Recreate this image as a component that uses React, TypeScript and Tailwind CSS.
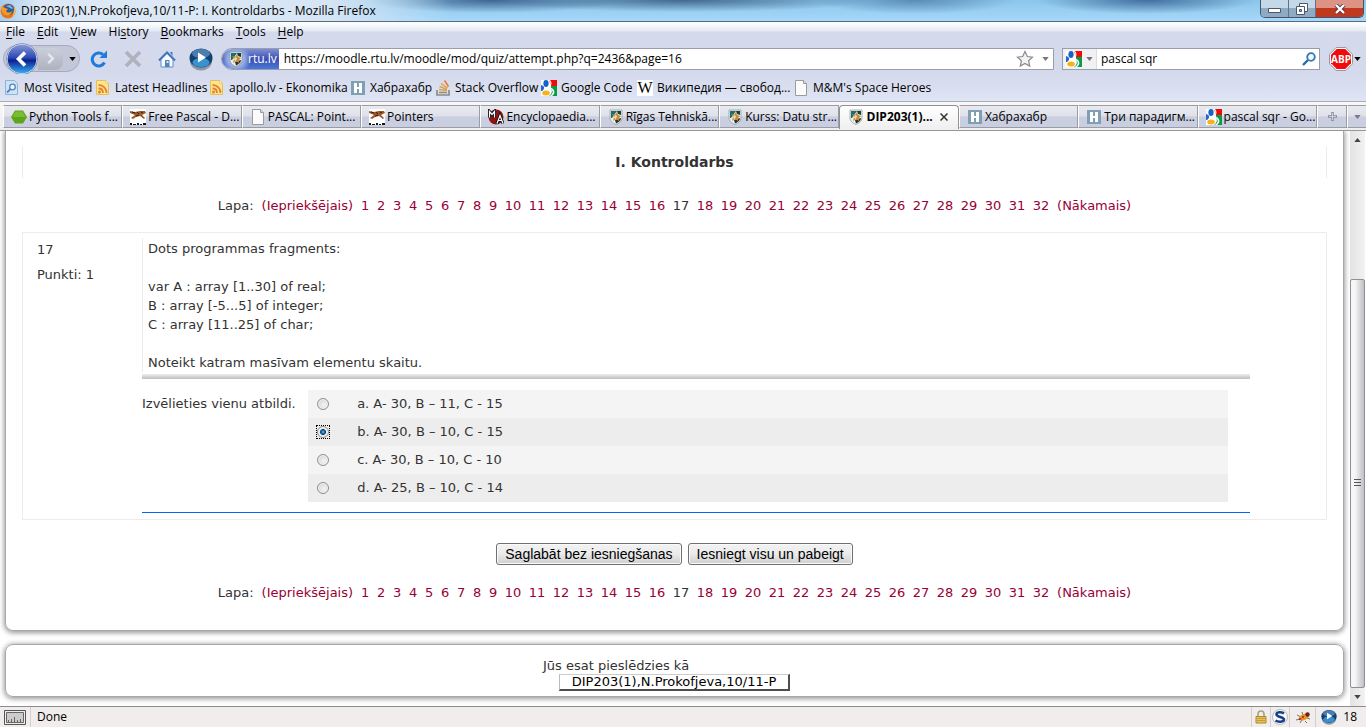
import React from "react";

type IconProps = { className?: string };

const Shield = ({ className = "h-4 w-4" }: IconProps) => (
  <svg viewBox="0 0 16 16" className={`shrink-0 ${className}`} aria-hidden="true">
    <path d="M2 1h12v8c0 3-3 5.5-6 6.5C5 14.500 2 12 2 9z" fill="#e9efe9" stroke="#8b9797" strokeWidth=".7" />
    <path d="M3 2h6L4 9H3z" fill="#1e6b70" />
    <path d="M9 2h4v4l-3-1z" fill="#173f3c" />
    <path d="M7 11l6-2c0 3-3 4.500-5 5.500z" fill="#2e3130" />
    <path d="M4 5l3 1 2-3 1 3 3 1-2 2v3L8 10l-3 2 1-4z" fill="#c98a3a" />
    <path d="M7 6l2 1-1 3-2-1z" fill="#f0dfb4" />
  </svg>
);
const Google = ({ className = "h-4 w-4" }: IconProps) => (
  <svg viewBox="0 0 16 16" className={`shrink-0 ${className}`} aria-hidden="true">
    <path d="M0 0h16v16H0z" fill="#fff" />
    <path d="M8 0h8v6h-6z" fill="#f00a0a" />
    <path d="M10 6h6v10H8c4-3 3-6 2-7z" fill="#0a9b45" />
    <path d="M0 5c4 1 4 4 1 6H0z" fill="#2469c9" />
    <ellipse cx="5" cy="3.500" rx="2.600" ry="3.400" fill="#1764c8" />
    <path d="M7 0c3 1 3 5 1 7l3 3c2 3-1 5-2 6h2c3-2 3-5 1-7L9 7c2-2 2-5 0-7z" fill="#fff" />
    <ellipse cx="5" cy="13" rx="3.800" ry="2.500" fill="#f6b21a" />
  </svg>
);
const Habr = () => (
  <svg viewBox="0 0 16 16" className="h-4 w-4 shrink-0" aria-hidden="true">
    <path d="M1 1h14v14H1z" fill="#7ea0b2" />
    <path d="M4 3h3v4h2V3h3v10H9V9H7v4H4z" fill="#fff" />
  </svg>
);
const Feed = () => (
  <svg viewBox="0 0 16 16" className="h-4 w-4 shrink-0" aria-hidden="true">
    <path d="M1.500.5h9l3 3v11h-12z" fill="#fbe596" stroke="#e9bf55" />
    <path d="M10.500.5v3h3z" fill="#fff6d0" stroke="#e9bf55" strokeWidth=".6" />
    <circle cx="4.500" cy="12" r="1.500" fill="#e9822a" />
    <path d="M3.500 8.500c3 0 4.500 2 4.500 4.500M3.500 5c5 0 8 3.500 8 8" fill="none" stroke="#e9822a" strokeWidth="1.800" />
  </svg>
);
const Page = () => (
  <svg viewBox="0 0 16 16" className="h-4 w-4 shrink-0" aria-hidden="true">
    <path d="M2.500.5h8l3 3v12h-11z" fill="#fbfbfb" stroke="#9b9b9b" />
    <path d="M10.500.5v3h3" fill="#ddd" stroke="#9b9b9b" />
  </svg>
);
const Search = () => (
  <svg viewBox="0 0 16 16" className="h-4 w-4 shrink-0" aria-hidden="true">
    <path d="M1.500 .5h9l3 3v11h-12z" fill="#cfe1f5" stroke="#8eb3dc" />
    <circle cx="8.500" cy="7" r="2.800" fill="#eef6ff" stroke="#5585bd" strokeWidth="1.300" />
    <path d="M6.500 9L3 12.500" stroke="#5585bd" strokeWidth="1.800" />
  </svg>
);
const Stack = () => (
  <svg viewBox="0 0 16 16" className="h-4 w-4 shrink-0" aria-hidden="true">
    <path d="M2 10v5h12v-5" fill="none" stroke="#8a8a8a" strokeWidth="1.700" />
    <path d="M4 12.500h8" stroke="#9a8c74" strokeWidth="1.600" />
    <path d="M4 9.500l8 1M4.500 6.500l7.500 2.700" stroke="#d8a54e" strokeWidth="1.500" />
    <path d="M6 3.500l6.500 4.500" stroke="#e89a3c" strokeWidth="1.500" />
    <path d="M9.500.5l4 6" stroke="#ee7a2e" strokeWidth="1.500" />
  </svg>
);
const Wiki = () => (
  <span className="flex h-4 w-4 shrink-0 items-center justify-center bg-white font-['Liberation_Serif',serif] text-[16px] leading-4 text-black" aria-hidden="true">W</span>
);
const Hexagon = () => (
  <svg viewBox="0 0 16 16" className="h-4 w-4 shrink-0" aria-hidden="true">
    <path d="M4 1.500h8l4 6.500-4 6.500H4L0 8z" fill="#5fa51c" />
    <path d="M4.500 2.500h7L14.500 8H1.500z" fill="#79bd31" />
  </svg>
);
const Cheetah = () => (
  <svg viewBox="0 0 16 16" className="h-4 w-4 shrink-0" aria-hidden="true">
    <path d="M0 0h16v16H0z" fill="#fff" />
    <path d="M0 2l5 1 5-1 5 0 1 2-4 2 3 3-1 1-4-3-4 1-3 2-2-1 4-3-5-2z" fill="#9a5a2c" />
    <path d="M2 3l3 1M7 3l2 2M11 3l2 1M6 7l3-1" stroke="#3a1c0c" strokeWidth="1" />
    <path d="M0 14h2v2H0zM3 15h3v1H3zM7 14h2v2H7zM10 15h2v1h-2zM13 14h3v2h-3z" fill="#151515" />
  </svg>
);
const Encyclo = () => (
  <svg viewBox="0 0 16 16" className="h-4 w-4 shrink-0" aria-hidden="true">
    <circle cx="8" cy="8" r="7.500" fill="#8e1414" />
    <path d="M1.500 8.500v-6L4 5.500l2.500-3v6" fill="none" stroke="#111" strokeWidth="3" />
    <path d="M1.500 8.500v-6L4 5.500l2.500-3v6" fill="none" stroke="#fff" strokeWidth="1.200" />
    <path d="M9 14.500l3-8 3 8M10 11.500h4" fill="none" stroke="#111" strokeWidth="3" />
    <path d="M9 14.500l3-8 3 8M10 11.500h4" fill="none" stroke="#fff" strokeWidth="1.200" />
  </svg>
);
const Arrow = ({ className = "" }: IconProps) => (
  <svg viewBox="0 0 8 5" className={`h-1 w-[7px] shrink-0 ${className}`} aria-hidden="true">
    <path d="M0 0h8L4 5z" fill="currentColor" />
  </svg>
);
const Play = ({ className = "" }: IconProps) => (
  <svg viewBox="0 0 24 24" className={`shrink-0 ${className}`} aria-hidden="true">
    <ellipse cx="12" cy="14" rx="11" ry="9.500" fill="#8b95a8" />
    <ellipse cx="12" cy="11" rx="11.500" ry="9.500" fill="#12406f" />
    <ellipse cx="12" cy="15.500" rx="8.500" ry="4.500" fill="#3793cf" />
    <ellipse cx="12" cy="6.500" rx="9" ry="4.500" fill="#4b7db0" />
    <path d="M9 5.500l8 5-8 5z" fill="#fff" />
  </svg>
);

const menus = ["File", "Edit", "View", "History", "Bookmarks", "Tools", "Help"];
const accessKeys: Record<string, number> = { History: 2 };

const bookmarks = [
  { label: "Most Visited", icon: <Search />, width: "w-[91px]" },
  { label: "Latest Headlines", icon: <Feed />, width: "w-[114px]" },
  { label: "apollo.lv - Ekonomika", icon: <Feed />, width: "w-[141px]" },
  { label: "Хабрахабр", icon: <Habr />, width: "w-[85px]" },
  { label: "Stack Overflow", icon: <Stack />, width: "w-[106px]" },
  { label: "Google Code", icon: <Google />, width: "w-[96px]" },
  { label: "Википедия — свобод...", icon: <Wiki />, width: "w-[156px]" },
  { label: "M&M's Space Heroes", icon: <Page />, width: "w-[150px]" },
];

const tabs = [
  { label: "Python Tools f...", icon: <Hexagon /> },
  { label: "Free Pascal - D...", icon: <Cheetah /> },
  { label: "PASCAL: Point...", icon: <Page /> },
  { label: "Pointers", icon: <Cheetah /> },
  { label: "Encyclopaedia...", icon: <Encyclo /> },
  { label: "Rīgas Tehniskā...", icon: <Shield /> },
  { label: "Kurss: Datu str...", icon: <Shield /> },
  { label: "DIP203(1)...", icon: <Shield />, active: true },
  { label: "Хабрахабр", icon: <Habr /> },
  { label: "Три парадигм...", icon: <Habr /> },
  { label: "pascal sqr - Go...", icon: <Google /> },
];

const options = [
  { key: "a", text: "a. A- 30, B – 11, C - 15" },
  { key: "b", text: "b. A- 30, B – 10, C - 15" },
  { key: "c", text: "c. A- 30, B – 10, C - 10" },
  { key: "d", text: "d. A- 25, B – 10, C - 14" },
];

const pages = Array.from({ length: 32 }, (_, i) => i + 1);

function TitleBar() {
  return (
    <header className="flex h-[22px] items-start border-b border-[#5b6b7f] bg-[linear-gradient(90deg,#a5cdee_0,#dfe9f5_3%,#d6e5f4_24%,transparent_33%),radial-gradient(ellipse_130px_13px_at_36%_0,#3f6590,transparent),radial-gradient(ellipse_190px_12px_at_50%_0,#43688f,transparent),radial-gradient(ellipse_100px_14px_at_67%_0,#5a8bb8,transparent),radial-gradient(ellipse_110px_14px_at_84%_0,#426f9f,transparent),linear-gradient(#8cc6ea,#a6d8fa)]">
      <div className="flex h-[21px] min-w-0 flex-1 items-center gap-[5px]">
        <svg viewBox="0 0 16 16" className="h-4 w-4 shrink-0" aria-hidden="true">
          <circle cx="8" cy="8" r="7.500" fill="#e8741c" />
          <circle cx="8.500" cy="6.500" r="5.500" fill="#2c5f9e" />
          <path d="M6 3l4-1 3 3-1 1-2-1z" fill="#7fb4df" />
          <path d="M1 3c1 1 3 1 4 2l3 1-2 2c1 2 4 2 6 0 0 3-3 5-6 4C3 11 1 8 1 3z" fill="#f39a27" />
          <path d="M14 4c2 4 1 9-3 11 3-3 3-6 3-11z" fill="#fbc83a" />
        </svg>
        <h1 className="truncate text-[12px] text-black">DIP203(1),N.Prokofjeva,10/11-P: I. Kontroldarbs - Mozilla Firefox</h1>
      </div>
      <div className="mr-[2px] flex h-[18px] overflow-hidden rounded-b-[5px] border border-t-0 border-[#44546a]">
        <button aria-label="Minimize" className="flex w-7 items-center justify-center border-r border-[#5f738b] bg-linear-to-b from-[#c5d8e8] from-45% to-[#8fabc4] to-50%">
          <svg viewBox="0 0 13 6" className="mt-1 h-[6px] w-[13px]"><path d="M.5.5h12v4H.5z" fill="#fff" stroke="#4c5868" /></svg>
        </button>
        <button aria-label="Restore" className="flex w-[27px] items-center justify-center border-r border-[#5f738b] bg-linear-to-b from-[#c5d8e8] from-45% to-[#8fabc4] to-50%">
          <svg viewBox="0 0 12 12" className="h-3 w-3"><path d="M3.500.5h8v8h-8z" fill="#fff" stroke="#4c5868" /><path d="M.5 3.500h8v8h-8z" fill="#fff" stroke="#4c5868" /><path d="M3.500 6.500h2v2h-2z" fill="#9ab" stroke="#4c5868" /></svg>
        </button>
        <button aria-label="Close window" className="flex w-[47px] items-center justify-center bg-linear-to-b from-[#dc9384] from-45% to-[#c0391f] to-50%">
          <svg viewBox="0 0 12 10" className="h-[10px] w-3"><path d="M2 1l8 8M10 1L2 9" stroke="#53384a" strokeWidth="4" /><path d="M2 1l8 8M10 1L2 9" stroke="#fff" strokeWidth="2.300" /></svg>
        </button>
      </div>
    </header>
  );
}

function MenuBar() {
  return (
    <nav aria-label="Menu" className="flex h-[21px] items-center bg-linear-to-b from-[#fafcfe] from-10% via-[#e6ebf5] via-40% to-[#d4d9ec] to-50% pb-[2px] text-[12px]">
      {menus.map((m) => {
        const k = accessKeys[m] ?? 0;
        return (
          <button key={m} className="px-[6px]">
            {m.slice(0, k)}<u className="underline-offset-2">{m[k]}</u>{m.slice(k + 1)}
          </button>
        );
      })}
    </nav>
  );
}

function NavBar() {
  return (
    <div className="flex h-[31px] items-center bg-[#d4d9ec]">
      <div className="ml-[3px] flex h-[27px] w-[77px] shrink-0 items-center rounded-full border border-[#a5abbd] bg-[#c3c8d9]">
        <button aria-label="Back" className="-my-1 ml-[2px] shrink-0">
          <svg viewBox="0 0 32 32" className="h-8 w-8">
            <defs><linearGradient id="back" x1="0" x2="0" y1="0" y2="1"><stop offset="0" stopColor="#8b9bd6" /><stop offset=".45" stopColor="#2c4bb4" /><stop offset=".55" stopColor="#0d2090" /><stop offset="1" stopColor="#37b6fa" /></linearGradient></defs>
            <circle cx="16" cy="16" r="15" fill="url(#back)" stroke="#f3f6fc" />
            <circle cx="16" cy="16" r="15.500" fill="none" stroke="#6f7fae" strokeWidth=".8" />
            <path d="M19 9.500L12.500 16l6.500 6.500" fill="none" stroke="#fff" strokeWidth="3.600" />
          </svg>
        </button>
        <button aria-label="Forward" className="flex h-[22px] w-[25px] items-center justify-center rounded-r-lg bg-linear-to-b from-[#cbcfdb] to-[#aeb2be]">
          <svg viewBox="0 0 10 14" className="h-[13px] w-[10px]"><path d="M2 2l5 5-5 5" fill="none" stroke="#e4e7ef" strokeWidth="2.600" /></svg>
        </button>
        <button aria-label="History" className="pl-[6px] text-black"><Arrow /></button>
      </div>
      <button aria-label="Reload" className="ml-[10px]">
        <svg viewBox="0 0 18 18" className="h-[18px] w-[18px]"><path d="M14.500 12.500A6.500 6.500 0 1 1 13 4.500" fill="none" stroke="#2079dd" strokeWidth="3" /><path d="M17 .5V8H9.500z" fill="#2079dd" /></svg>
      </button>
      <button aria-label="Stop" className="ml-4">
        <svg viewBox="0 0 18 18" className="h-[18px] w-[18px]"><path d="M2 2l14 14M16 2L2 16" stroke="#aeb2bd" strokeWidth="3.600" /></svg>
      </button>
      <button aria-label="Home" className="ml-4">
        <svg viewBox="0 0 18 18" className="h-[18px] w-[18px]"><path d="M3 9v8h12V9L9 3z" fill="#f7faff" stroke="#5e8fcc" /><path d="M1 10.500L9 2.500l8 8" fill="none" stroke="#3f78c0" strokeWidth="2.200" /><path d="M12 2h2.500v4" fill="#3f78c0" /><path d="M7 10h4.500v7H7z" fill="#5484bc" /><path d="M8.500 11h2v2h-2z" fill="#dceafa" /></svg>
      </button>
      <button aria-label="Play" className="ml-[13px]"><Play className="h-6 w-6" /></button>
      <div className="ml-2 flex h-[22px] min-w-0 flex-1 items-center rounded-l-full border border-[#9a9eab] bg-white">
        <button className="flex h-full shrink-0 items-center gap-1 rounded-l-full bg-[radial-gradient(circle_at_14px_10px,#c3d3f4_0,#8ea6e2_9px,transparent_15px),linear-gradient(#7f90d2,#3a4fb4_50%,#4a78d8)] pl-[6px] pr-[2px] text-[12px] text-white"><Shield />rtu.lv</button>
        <input aria-label="Address" className="min-w-0 flex-1 bg-transparent pl-[5px] text-[12px] text-black outline-none" defaultValue="https://moodle.rtu.lv/moodle/mod/quiz/attempt.php?q=2436&page=16" />
        <button aria-label="Bookmark this page"><svg viewBox="0 0 18 18" className="h-[18px] w-[18px]"><path d="M9 1.500l2.300 5 5.200.6-3.900 3.600 1.100 5.400L9 13.400l-4.700 2.700 1.100-5.400L1.500 7.100l5.200-.6z" fill="#f3f3f3" stroke="#8b8b8b" strokeWidth="1.200" /></svg></button>
        <button aria-label="Show history" className="pl-2 pr-1 text-[#777]"><Arrow /></button>
      </div>
      <div className="ml-2 flex h-[22px] w-[258px] shrink-0 items-center border border-[#9a9eab] bg-white">
        <button aria-label="Search engine" className="flex h-full items-center gap-1 border-r border-[#ddd] bg-[#f1f1f3] pl-[3px] pr-[3px] text-[#777]"><Google /><Arrow /></button>
        <input aria-label="Search" className="min-w-0 flex-1 bg-transparent pl-1 text-[12px] text-black outline-none" defaultValue="pascal sqr" />
        <button aria-label="Go" className="pr-[3px]"><svg viewBox="0 0 14 14" className="h-[14px] w-[14px]"><circle cx="9" cy="5" r="3.800" fill="#f2f8ff" stroke="#3477b3" strokeWidth="1.800" /><path d="M6 8l-5 5" stroke="#2b69a6" strokeWidth="2.400" /></svg></button>
      </div>
      <button aria-label="Adblock Plus" className="ml-[9px] mr-[5px] flex shrink-0 items-center gap-px text-black">
        <svg viewBox="0 0 24 24" className="h-6 w-6"><path d="M7.200.5h9.600l6.700 6.700v9.600l-6.700 6.700H7.200L.5 16.800V7.200z" fill="#fff" stroke="#999" /><path d="M7.700 2h8.600L22 7.700v8.600L16.300 22H7.700L2 16.300V7.700z" fill="#f00c0c" /><text x="12" y="16" textAnchor="middle" fontSize="10" fontWeight="700" fontFamily="Open Sans, sans-serif" fill="#fff">ABP</text></svg>
        <Arrow className="w-1" />
      </button>
    </div>
  );
}

function BookmarksBar() {
  return (
    <nav aria-label="Bookmarks" className="flex h-7 items-center border-b border-[#a9adba] bg-linear-to-b from-[#d4d9ec] to-[#e0e5f4] pl-1 text-[12px]">
      {bookmarks.map((b) => (
        <a key={b.label} href="#" className={`flex shrink-0 items-center gap-1 whitespace-nowrap text-black ${b.width}`}>
          {b.icon}
          {b.label}
        </a>
      ))}
    </nav>
  );
}

function TabStrip() {
  return (
    <div className="flex h-[29px] items-start border-b border-[#979797] bg-linear-to-b from-[#f7f7f8] from-10% to-[#efeff0] pt-[3px] text-[12px]">
      <div role="tablist" className="ml-[3px] flex h-[23px] min-w-0 flex-1">
        {tabs.map((t) =>
          t.active ? (
            <button key={t.label} role="tab" aria-selected="true" className="flex h-6 min-w-0 flex-1 items-center gap-[3px] overflow-hidden rounded-t border border-b-0 border-[#8f9095] bg-linear-to-b from-white to-[#efeff0] pb-px pl-2 font-bold whitespace-nowrap">
              {t.icon}
              {t.label}
              <svg viewBox="0 0 8 8" className="ml-1 h-2 w-2 shrink-0"><path d="M.5.5l7 7M7.500.5l-7 7" stroke="#333" strokeWidth="1.500" /></svg>
            </button>
          ) : (
            <button key={t.label} role="tab" aria-selected="false" className="flex min-w-0 flex-1 items-center gap-[2px] overflow-hidden border border-[#9a9ca4] border-l-white bg-linear-to-b from-[#e9eaf0] via-[#dfe1ea] via-48% to-[#c9cee1] to-52% pl-[7px] whitespace-nowrap">
              {t.icon}
              {t.label}
            </button>
          ),
        )}
      </div>
      <button aria-label="New tab" className="flex h-[23px] w-[30px] items-center justify-center border border-[#9a9ca4] border-l-white bg-linear-to-b from-[#e9eaf0] via-[#dfe1ea] via-48% to-[#c9cee1] to-52%">
        <svg viewBox="0 0 9 9" className="h-[9px] w-[9px]"><path d="M4.500 0v9M0 4.500h9" stroke="#858a96" strokeWidth="2.400" /><path d="M4.500 1v7M1 4.500h7" stroke="#dfe2ea" strokeWidth=".8" /></svg>
      </button>
      <button aria-label="List all tabs" className="flex h-[23px] w-[19px] items-center justify-center border border-r-0 border-[#9a9ca4] border-l-white bg-linear-to-b from-[#e9eaf0] via-[#dfe1ea] via-48% to-[#c9cee1] to-52% text-[#777b86]"><Arrow /></button>
    </div>
  );
}

function Pagination({ label }: { label: string }) {
  return (
    <nav aria-label={label} className="flex h-5 items-center justify-center gap-2 text-[#990033]">
      <span className="text-[#333]">Lapa:</span>
      <a href="#">(Iepriekšējais)</a>
      {pages.map((p) => {
        const width = p < 10 ? "w-2" : "w-4";
        return p === 17 ? (
          <span key={p} aria-current="page" className={`flex justify-center text-[#333] ${width}`}>{p}</span>
        ) : (
          <a key={p} href="#" className={`flex justify-center ${width}`}>{p}</a>
        );
      })}
      <a href="#">(Nākamais)</a>
    </nav>
  );
}

function Question() {
  return (
    <section className="mt-4 flex border border-[#efebe5] pb-[6px]">
      <div className="w-[119px] shrink-0 pl-[14px] pt-[7px]">
        <p className="leading-[19px]">17</p>
        <p className="mt-[6px] leading-[19px]">Punkti: 1</p>
      </div>
      <div className="w-[85%] pt-[5px]">
        <div className="border-l border-[#efebe5] pl-[5px] pt-px leading-[19px]">
          <p>Dots programmas fragments:</p>
          <p className="mt-[19px]">var A : array [1..30] of real;<br />B : array [-5...5] of integer;<br />C : array [11..25] of char;</p>
          <p className="mt-[19px]">Noteikt katram masīvam elementu skaitu.</p>
        </div>
        <div className="mt-[2px] h-[5px] bg-linear-to-b from-[#efefef] to-[#bdbdbd]" />
        <fieldset aria-label="Izvēlieties vienu atbildi." className="mt-[11px] flex">
          <p className="w-[15%] shrink-0 pt-1 leading-[19px] whitespace-nowrap">Izvēlieties vienu atbildi.</p>
          <div className="mr-[22px] flex-1">
            {options.map((o) => (
              <label key={o.key} className="flex h-7 items-center bg-[#f4f4f4] pl-2 even:bg-[#ededed]">
                <span className="flex p-px outline-dotted outline-0 outline-black has-checked:outline-1 -outline-offset-1">
                  <input type="radio" name="answer" defaultChecked={o.key === "b"} className="h-3 w-3 appearance-none rounded-full border border-[#8e8f8f] bg-[radial-gradient(circle_at_60%_60%,#f4f4f4,#c9cdd2)] shadow-[inset_0_0_0_1px_#f4f4f4] checked:bg-[radial-gradient(circle,#5fc6ec_0,#176296_25%,#123e66_38%,#e4e8ec_45%)]" />
                </span>
                <span className="ml-[27px]">{o.text}</span>
              </label>
            ))}
          </div>
        </fieldset>
        <div className="mt-[10px] h-px bg-[#0066ff]" />
      </div>
    </section>
  );
}

function Scrollbar() {
  return (
    <div aria-hidden="true" className="mr-px flex w-[15px] shrink-0 flex-col items-stretch bg-linear-to-r from-[#e3e3e3] to-[#f2f2f2] text-[#444]">
      <div className="flex h-[18px] items-center justify-center"><Arrow className="rotate-180" /></div>
      <div className="flex-[130]" />
      <div className="flex flex-[409] items-center justify-center rounded-[2px] border border-[#8f9096] bg-linear-to-r from-[#f6f6f7] from-30% to-[#c0c0c6]">
        <svg viewBox="0 0 7 8" className="h-2 w-[7px]"><path d="M0 .5h7M0 3.500h7M0 6.500h7" stroke="#555" /></svg>
      </div>
      <div className="flex h-[18px] items-center justify-center"><Arrow /></div>
    </div>
  );
}

function StatusBar() {
  return (
    <footer className="flex h-[21px] items-center border-t border-[#8c8c8c] bg-[#f0edec] text-[12px] text-black">
      <div className="flex h-full w-[31px] items-center border-r border-[#d2cfce] pl-1">
        <svg viewBox="0 0 22 15" className="h-[15px] w-[22px]"><path d="M.5.5h21v14H.5z" fill="#eee" stroke="#555" /><path d="M2.500 2.500h17v10h-17z" fill="#ccc" stroke="#666" /><path d="M4.500 12v-2M7.500 12V9M10.500 12V7M13.500 12v-2M16.500 12V9" stroke="#666" /></svg>
      </div>
      <span className="ml-[6px] flex-1">Done</span>
      <span className="flex h-full w-[19px] items-center justify-center border-l border-[#d2cfce]">
        <svg viewBox="0 0 12 14" className="h-[14px] w-3"><path d="M3 7V4a3 3 0 0 1 6 0v3" fill="none" stroke="#a9a184" strokeWidth="1.600" /><path d="M1 6.500h10V13H1z" fill="#e8c456" stroke="#a88a2e" /><path d="M2 8.500h8M2 10.500h8" stroke="#c39d38" /></svg>
      </span>
      <span className="flex h-full w-[19px] items-center justify-center border-l border-[#d2cfce]">
        <svg viewBox="0 0 16 16" className="h-4 w-4"><circle cx="8" cy="8" r="7.500" fill="#fafafa" stroke="#bbb" /><path d="M12 4.500C9 2.500 4.500 3 4.500 5.500S12 8 12 10.500 6.500 13.500 3.500 11.500" fill="none" stroke="#173f8a" strokeWidth="2.600" /></svg>
      </span>
      <span className="flex h-full w-[26px] items-center justify-center border-l border-[#d2cfce]">
        <svg viewBox="0 0 16 14" className="h-[14px] w-4"><path d="M2 5l4 2M1 10l4-1M5 13l2-3M10 11l2 2M12 8l3 1M7 2l1 3" stroke="#555" strokeWidth=".8" /><ellipse cx="9" cy="7" rx="5.500" ry="3" transform="rotate(-25 9 7)" fill="#e79a2a" /><circle cx="12.500" cy="4.500" r="2.200" fill="#6d2412" /><circle cx="8" cy="7" r="1.200" fill="#c33a12" /><circle cx="5" cy="9" r="1.300" fill="#c33a12" /></svg>
      </span>
      <span className="flex h-full items-center gap-[6px] border-l border-[#d2cfce] pl-[5px] pr-[9px]"><Play className="h-4 w-4" />18</span>
    </footer>
  );
}

const submitClass =
  "h-[22px] rounded-[3px] border border-[#707070] bg-linear-to-b from-[#f2f2f2] via-[#ebebeb] via-48% to-[#cfcfcf] px-2 font-['Liberation_Sans',Arial,sans-serif] text-[14px] leading-5 text-black shadow-[inset_0_0_0_1px_#fafafa]";

export default function App() {
  return (
    <div className="flex min-h-screen flex-col bg-white pb-px font-['Open_Sans','Noto_Sans',sans-serif] text-black">
      <TitleBar />
      <MenuBar />
      <NavBar />
      <BookmarksBar />
      <TabStrip />
      <div className="flex flex-1">
        <main className="flex min-w-0 flex-1 flex-col overflow-hidden bg-white pl-[5px] pr-[6px] font-['DejaVu_Sans',Verdana,sans-serif] text-[13px] text-[#333]">
          <div className="rounded-b-lg border border-t-0 border-[#a8a8a8] px-4 pb-[27px] pt-[15px] shadow-[0_1px_5px_1px_#999]">
            <h2 className="flex h-8 items-center justify-center border-x border-[#efebe5] text-[14px] font-bold">I. Kontroldarbs</h2>
            <div className="mt-[18px]"><Pagination label="Lapas augšā" /></div>
            <Question />
            <div className="mb-[18px] mt-[23px] flex justify-center gap-[6px]">
              <button className={submitClass}>Saglabāt bez iesniegšanas</button>
              <button className={submitClass}>Iesniegt visu un pabeigt</button>
            </div>
            <Pagination label="Lapas apakšā" />
          </div>
          <div className="mb-[9px] mt-[13px] flex flex-col items-center rounded-lg border border-[#a8a8a8] pb-[5px] pt-[13px] shadow-[0_1px_5px_1px_#999]">
            <p className="w-[263px] leading-4">Jūs esat pieslēdzies kā</p>
            <a href="#" className="border-b-2 border-l border-r-2 border-t border-b-[#4d4d4d] border-l-[#bbb] border-r-[#4d4d4d] border-t-[#ccc] px-3 leading-[14px] text-black">DIP203(1),N.Prokofjeva,10/11-P</a>
          </div>
        </main>
        <Scrollbar />
      </div>
      <StatusBar />
    </div>
  );
}
